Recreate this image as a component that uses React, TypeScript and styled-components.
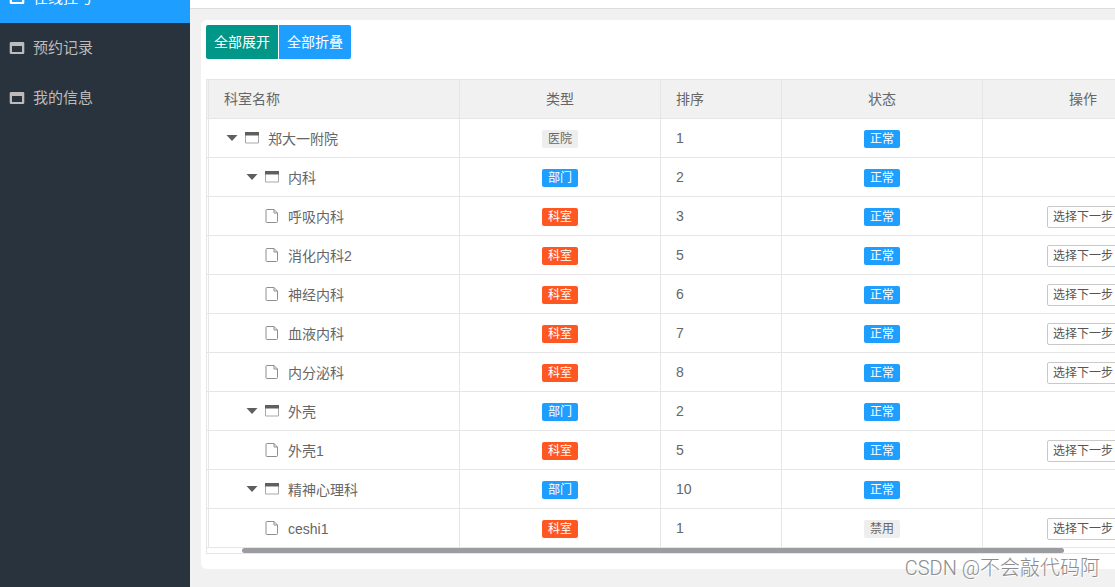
import React, { useState } from "react";
import styled, { createGlobalStyle } from "styled-components";

const GlobalStyle = createGlobalStyle`
  * { box-sizing: border-box; }
  body {
    margin: 0;
    overflow: hidden;
    background: #f1f1f1;
    color: #666;
    font: 14px/24px "Liberation Sans", "Noto Sans CJK SC", sans-serif;
  }
  button { font-family: inherit; cursor: pointer; }
`;

const Page = styled.div`
  display: flex;
  height: 100vh;
  overflow: hidden;
`;

const Sidebar = styled.nav`
  flex: 0 0 190px;
  background: #28333e;
  overflow: hidden;
`;

const Menu = styled.ul`
  list-style: none;
  margin: -27px 0 0;
  padding: 0;
`;

const MenuLink = styled.a<{ $active?: boolean }>`
  display: flex;
  align-items: center;
  gap: 8px;
  height: 50px;
  padding: 0 9px;
  font-size: 15px;
  text-decoration: none;
  color: ${(p) => (p.$active ? "#fff" : "#bebbbb")};
  background: ${(p) => (p.$active ? "#1e9fff" : "transparent")};
`;

const Main = styled.main`
  flex: 1;
  min-width: 0;
`;

const TopBar = styled.header`
  height: 9px;
  background: #fff;
  border-bottom: 1px solid #ddd;
`;

const Card = styled.section`
  margin: 11px 0 0 11px;
  padding: 5px 0 15px 5px;
  background: #fff;
  border-radius: 6px 0 0 6px;
`;

const ButtonGroup = styled.div`
  display: flex;
  gap: 1px;
  margin-bottom: 20px;
`;

const ToolButton = styled.button<{ $color: string; $side: "left" | "right" }>`
  height: 34px;
  padding: 0 8px 2px;
  border: 0;
  border-radius: ${(p) => (p.$side === "left" ? "2px 0 0 2px" : "0 2px 2px 0")};
  background: ${(p) => p.$color};
  color: #fff;
  font-size: 14px;
`;

const TableBox = styled.div`
  border: 1px solid #e6e6e6;
  border-right: 0;
  overflow: hidden;
`;

const Table = styled.table`
  width: 100%;
  min-width: 977px;
  table-layout: fixed;
  border-collapse: separate;
  border-spacing: 0;
`;

const Col = styled.col<{ $width: number }>`
  width: ${(p) => p.$width}px;
`;

const HeadCell = styled.th<{ $center?: boolean }>`
  height: 39px;
  padding: 0 15px;
  border: solid #e6e6e6;
  border-width: 0 1px 1px 0;
  background: #f1f1f1;
  font-weight: 400;
  text-align: ${(p) => (p.$center ? "center" : "left")};
`;

const Cell = styled.td<{ $center?: boolean }>`
  height: 39px;
  padding: 0 15px;
  border: solid #e6e6e6;
  border-width: 0 1px 1px 0;
  text-align: ${(p) => (p.$center ? "center" : "left")};
`;

const ControlCell = styled(Cell)`
  padding-top: 2px;
`;

const Spacer = styled.td`
  padding: 0;
  border: solid #e6e6e6;
  border-width: 0 1px 1px 0;
`;

const HeadSpacer = styled(Spacer)`
  background: #f1f1f1;
`;

const TreeNode = styled.div<{ $indent: number }>`
  display: flex;
  align-items: center;
  padding-left: ${(p) => p.$indent * 20}px;
`;

const Toggle = styled.button`
  display: flex;
  width: 20px;
  padding: 0 2px;
  border: 0;
  background: none;
`;

const NodeName = styled.span`
  padding-top: 2px;
  margin-left: 8px;
`;

const badgeColors = {
  gray: "#eee",
  blue: "#1e9fff",
  red: "#ff5722",
};

const Badge = styled.span<{ $tone: keyof typeof badgeColors }>`
  display: block;
  width: 36px;
  margin: 0 auto;
  border-radius: 2px;
  font-size: 12px;
  line-height: 18px;
  background: ${(p) => badgeColors[p.$tone]};
  color: ${(p) => (p.$tone === "gray" ? "#666" : "#fff")};
`;

const RowButton = styled.button`
  display: block;
  height: 22px;
  margin: 0 auto;
  padding: 0 5px;
  border: 1px solid #c9c9c9;
  border-radius: 2px;
  background: #fff;
  color: #555;
  font-size: 12px;
  line-height: 20px;
  white-space: nowrap;
`;

const ScrollTrack = styled.div`
  height: 5px;
  padding: 0 51px 0 35px;
`;

const ScrollThumb = styled.div`
  height: 5px;
  border-radius: 3px;
  background: #9b9ca0;
`;

const Watermark = styled.div`
  position: absolute;
  right: 15px;
  bottom: 4px;
  color: #8c8c8c;
  font-family: Roboto, "Noto Sans CJK SC", sans-serif;
  font-size: 20px;
  font-weight: 300;
  line-height: 30px;
  text-shadow: 1px 1px 0 #fff;
`;

const MenuIcon = () => (
  <svg width="16" height="14" viewBox="0 0 16 14" aria-hidden="true">
    <path
      fill="currentColor"
      fillRule="evenodd"
      d="M2 1h12a1.3 1.3 0 0 1 1.3 1.3v9.4a1.3 1.3 0 0 1-1.3 1.3H2a1.3 1.3 0 0 1-1.3-1.3V2.3A1.3 1.3 0 0 1 2 1zM3 5v6h10V5z"
    />
  </svg>
);

const ArrowIcon = () => (
  <svg width="12" height="8" viewBox="0 0 12 8" aria-hidden="true">
    <path fill="#5f5f5f" d="M0.5 1h11L6 7z" />
  </svg>
);

const FolderIcon = () => (
  <svg width="16" height="14" viewBox="0 0 16 14" aria-hidden="true">
    <path fill="none" stroke="#a8a8a8" d="M1.5 3v9h13V3" />
    <path fill="#5f5f5f" d="M1 1h14v3.5H1z" />
  </svg>
);

const FileIcon = () => (
  <svg width="16" height="16" viewBox="0 0 16 16" aria-hidden="true">
    <path
      fill="none"
      stroke="#8e8e8e"
      d="M3 1.5h7l3.5 3.5v8.5a1 1 0 0 1-1 1H3a1 1 0 0 1-1-1v-11a1 1 0 0 1 1-1zM10 1.5V5h3.5"
    />
  </svg>
);

type Kind = "医院" | "部门" | "科室";

interface Department {
  name: string;
  level: number;
  kind: Kind;
  order: number;
  disabled?: boolean;
}

const departments: Department[] = [
  { name: "郑大一附院", level: 0, kind: "医院", order: 1 },
  { name: "内科", level: 1, kind: "部门", order: 2 },
  { name: "呼吸内科", level: 2, kind: "科室", order: 3 },
  { name: "消化内科2", level: 2, kind: "科室", order: 5 },
  { name: "神经内科", level: 2, kind: "科室", order: 6 },
  { name: "血液内科", level: 2, kind: "科室", order: 7 },
  { name: "内分泌科", level: 2, kind: "科室", order: 8 },
  { name: "外壳", level: 1, kind: "部门", order: 2 },
  { name: "外壳1", level: 2, kind: "科室", order: 5 },
  { name: "精神心理科", level: 1, kind: "部门", order: 10 },
  { name: "ceshi1", level: 2, kind: "科室", order: 1, disabled: true },
];

const kindTones: Record<Kind, keyof typeof badgeColors> = {
  医院: "gray",
  部门: "blue",
  科室: "red",
};

const menuItems = ["在线挂号", "预约记录", "我的信息"];

export default function App() {
  const [expanded, setExpanded] = useState(true);
  const rows = expanded ? departments : departments.filter((d) => d.level === 0);

  return (
    <Page>
      <GlobalStyle />
      <Sidebar>
        <Menu>
          {menuItems.map((label, i) => (
            <li key={label}>
              <MenuLink href="#" $active={i === 0}>
                <MenuIcon />
                {label}
              </MenuLink>
            </li>
          ))}
        </Menu>
      </Sidebar>
      <Main>
        <TopBar />
        <Card>
          <ButtonGroup>
            <ToolButton $color="#009688" $side="left" onClick={() => setExpanded(true)}>
              全部展开
            </ToolButton>
            <ToolButton $color="#1e9fff" $side="right" onClick={() => setExpanded(false)}>
              全部折叠
            </ToolButton>
          </ButtonGroup>
          <TableBox>
            <Table>
              <colgroup>
                <Col $width={2} />
                <Col $width={251} />
                <Col $width={201} />
                <Col $width={121} />
                <Col $width={201} />
                <Col $width={201} />
              </colgroup>
              <thead>
                <tr>
                  <HeadSpacer />
                  <HeadCell>科室名称</HeadCell>
                  <HeadCell $center>类型</HeadCell>
                  <HeadCell>排序</HeadCell>
                  <HeadCell $center>状态</HeadCell>
                  <HeadCell $center>操作</HeadCell>
                </tr>
              </thead>
              <tbody>
                {rows.map((d) => (
                  <tr key={d.name}>
                    <Spacer />
                    <Cell>
                      <TreeNode $indent={d.level}>
                        {d.kind === "科室" ? (
                          <FileIcon />
                        ) : (
                          <>
                            <Toggle aria-label="折叠" onClick={() => setExpanded(!expanded)}>
                              <ArrowIcon />
                            </Toggle>
                            <FolderIcon />
                          </>
                        )}
                        <NodeName>{d.name}</NodeName>
                      </TreeNode>
                    </Cell>
                    <ControlCell $center>
                      <Badge $tone={kindTones[d.kind]}>{d.kind}</Badge>
                    </ControlCell>
                    <Cell>{d.order}</Cell>
                    <ControlCell $center>
                      <Badge $tone={d.disabled ? "gray" : "blue"}>
                        {d.disabled ? "禁用" : "正常"}
                      </Badge>
                    </ControlCell>
                    <ControlCell $center>
                      {d.kind === "科室" && <RowButton>选择下一步</RowButton>}
                    </ControlCell>
                  </tr>
                ))}
              </tbody>
            </Table>
            <ScrollTrack>
              <ScrollThumb />
            </ScrollTrack>
          </TableBox>
        </Card>
      </Main>
      <Watermark>CSDN @不会敲代码阿</Watermark>
    </Page>
  );
}
